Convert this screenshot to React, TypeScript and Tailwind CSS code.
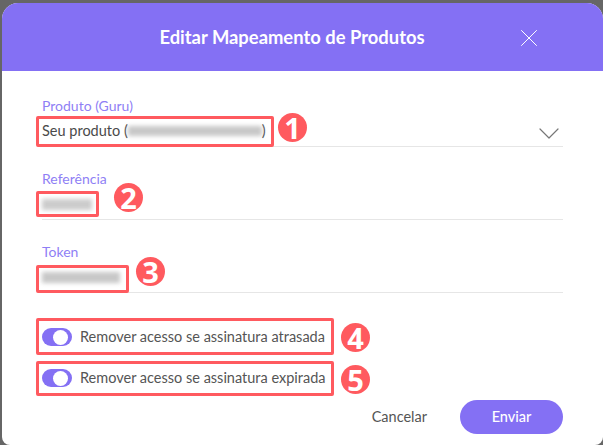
import { ChevronDown, X } from "lucide-react";

function Field({ label, children }: { label: string; children: React.ReactNode }) {
  return (
    <div className="flex flex-col">
      <label className="h-[18px] mt-[1px] text-[14px] leading-[18px] text-[#8f7ff5]">{label}</label>
      <div className="mt-[6px] h-[26px] pb-[5px] flex items-center border-b border-[#e6e6e6]">{children}</div>
    </div>
  );
}

function Toggle({ label }: { label: string }) {
  return (
    <div className="flex items-center gap-[8px] h-[18px]">
      <span className="flex items-center justify-end w-[30px] h-[18px] rounded-full bg-[#8470f4] pr-[4px]">
        <span className="w-[15px] h-[15px] rounded-full bg-white" />
      </span>
      <span className="text-[14.5px] text-[#555555]">{label}</span>
    </div>
  );
}

function Marker({ n, className }: { n: number; className: string }) {
  return (
    <span className={`absolute w-[29px] h-[29px] rounded-full bg-[#ff5a5f] text-white font-bold text-[29px] leading-[29px] text-center font-['Noto_Sans',sans-serif] ${className}`}>
      {n}
    </span>
  );
}

function Box({ className }: { className: string }) {
  return <span className={`absolute border-[3px] border-[#ff5a5f] rounded-[2px] ${className}`} />;
}

export default function App() {
  return (
    <div className="w-[603px] h-[445px] bg-[#666666] pt-[3px] pl-[2px] overflow-hidden font-['Lato',sans-serif]">
      <div className="relative h-[442px] w-[601px] bg-white rounded-t-[16px] rounded-b-[8px] overflow-hidden">
        <header className="relative h-[68px] bg-[#8470f4] flex items-center justify-center">
          <h1 className="text-[18.4px] font-bold text-white pr-[21px] pt-[1px]">Editar Mapeamento de Produtos</h1>
          <X className="absolute left-[512px] top-[20px] w-[30px] h-[30px] text-white" strokeWidth={0.8} />
        </header>

        <div className="px-[40px] pt-[25px] flex flex-col gap-[22px]">
          <Field label="Produto (Guru)">
            <span className="text-[14.5px] text-[#4a4a4a]">Seu produto (</span>
            <span className="w-[134px] h-[10px] bg-[#c8c8c8] blur-[2px]" />
            <span className="text-[14.5px] text-[#4a4a4a]">)</span>
            <ChevronDown className="ml-auto -mr-[4px] -my-[5px] translate-y-[2.5px] shrink-0 w-[36px] h-[36px] text-[#777777]" strokeWidth={0.8} />
          </Field>
          <Field label="Referência">
            <span className="w-[50px] h-[11px] bg-[#cccccc] blur-[2px]" />
          </Field>
          <Field label="Token">
            <span className="w-[78px] h-[11px] bg-[#c8c8c8] blur-[2px]" />
          </Field>
        </div>

        <div className="px-[40px] pt-[35px] flex flex-col gap-[23px]">
          <Toggle label="Remover acesso se assinatura atrasada" />
          <Toggle label="Remover acesso se assinatura expirada" />
        </div>

        <div className="absolute right-[40px] bottom-[11px] flex items-center gap-[33px]">
          <button className="text-[14.5px] text-[#555555]">Cancelar</button>
          <button className="w-[103px] h-[34px] rounded-full bg-[#8470f4] text-white text-[14.5px] font-medium">Enviar</button>
        </div>

        <Box className="left-[34px] top-[113px] w-[238px] h-[31px]" />
        <Box className="left-[34px] top-[188px] w-[63px] h-[26px]" />
        <Box className="left-[34px] top-[262px] w-[93px] h-[28px]" />
        <Box className="left-[34px] top-[315px] w-[298px] h-[37px]" />
        <Box className="left-[34px] top-[358px] w-[298px] h-[35px]" />

        <Marker n={1} className="left-[276px] top-[110px]" />
        <Marker n={2} className="left-[112px] top-[180px]" />
        <Marker n={3} className="left-[134px] top-[254px]" />
        <Marker n={4} className="left-[339px] top-[320px]" />
        <Marker n={5} className="left-[339px] top-[362px]" />
      </div>
    </div>
  );
}
